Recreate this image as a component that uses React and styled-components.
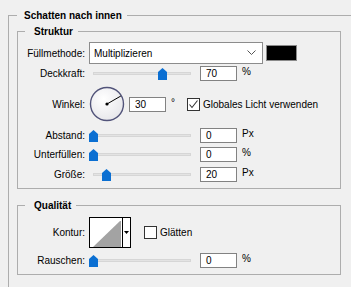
import React from 'react'
import styled, {createGlobalStyle} from "styled-components";

const GlobalStyle = createGlobalStyle`
    html, body {
        margin: 0;
        background: #f0f0f0;
        overflow: hidden;
    }
    body {
        font-family: "Liberation Sans", Arial, sans-serif;
        font-size: 10px;
        color: #000;
    }
`;

const Viewport = styled.div`
    width: 100vw;
    height: 100vh;
    overflow: hidden;
    padding-top: 8px;
    box-sizing: border-box;
`;

const Panel = styled.fieldset`
    margin: 0 -30px 0 8px;
    padding: 1px 0 0 8px;
    min-width: 0;
    height: 300px;
    border: 1px solid #adadad;
`;

const Legend = styled.legend`
    margin-left: ${p => p.$offset || 0}px;
    padding: 0 5px 0 ${p => p.$pad || 7}px;
    font-weight: bold;
    font-size: 10px;
    line-height: 15px;
`;

const Group = styled.fieldset`
    margin: ${p => p.$top || 0}px 0 0 0;
    padding: ${p => p.$padTop}px 0 ${p => p.$padBottom}px 0;
    width: 322px;
    min-width: 0;
    border: 1px solid #adadad;
`;

const Row = styled.div`
    display: flex;
    align-items: center;
    height: ${p => p.$h || 15}px;
    margin-top: ${p => p.$mt || 0}px;
`;

const Label = styled.div`
    width: 67px;
    margin-right: 4px;
    text-align: right;
    white-space: nowrap;
`;

const Select = styled.div`
    box-sizing: border-box;
    width: 174px;
    height: 22px;
    display: flex;
    align-items: center;
    justify-content: space-between;
    padding: 0 6px 0 4px;
    background: #fff;
    border: 1px solid #8c8c8c;
`;

const Swatch = styled.div`
    box-sizing: border-box;
    width: 31px;
    height: 16px;
    margin-left: 3px;
    background: #000;
    border: 1px solid #8a8a8a;
`;

const SliderBox = styled.div`
    position: relative;
    width: 108px;
    height: 15px;
    display: flex;
    align-items: center;
`;

const Track = styled.div`
    box-sizing: border-box;
    margin: 0 6px 0 4px;
    flex: 1;
    height: 3px;
    background: #e3e3e3;
    border: 1px solid #d6d6d6;
`;

const Thumb = styled.svg`
    position: absolute;
    top: 2px;
    margin-left: -4px;
`;

const Field = styled.div`
    display: flex;
    align-items: flex-start;
    margin-left: ${p => p.$ml || 3}px;
`;

const NumberBox = styled.div`
    box-sizing: border-box;
    width: 37px;
    height: 15px;
    padding-left: 5px;
    line-height: 13px;
    background: #fff;
    border: 1px solid #828282;
`;

const Unit = styled.div`
    margin-left: 5px;
    line-height: 11px;
`;

const Check = styled.div`
    box-sizing: border-box;
    width: 13px;
    height: 13px;
    margin-left: ${p => p.$ml || 0}px;
    background: #fff;
    border: 1px solid #333;
    display: flex;
    align-items: center;
    justify-content: center;
`;

const CheckText = styled.span`
    margin-left: 3px;
    white-space: nowrap;
`;

const Contour = styled.div`
    box-sizing: border-box;
    width: 42px;
    height: 31px;
    display: flex;
    border: 1px solid #000;
    background: #fff;
`;

const ContourPreview = styled.svg`
    display: block;
    border-right: 1px solid #000;
`;

const ContourArrow = styled.div`
    flex: 1;
    display: flex;
    align-items: center;
    justify-content: center;
`;

const NumberField = ({value, unit, ml}) => (
    <Field $ml={ml}>
        <NumberBox>{value}</NumberBox>
        <Unit>{unit}</Unit>
    </Field>
);

const SliderRow = ({label, value, max, unit, mt}) => (
    <Row $mt={mt}>
        <Label>{label}</Label>
        <SliderBox>
            <Track/>
            <Thumb width="9" height="12" viewBox="0 0 9 12" style={{left: 4 + (value / max) * 98}}>
                <path d="M4.5 0 L9 4 V12 H0 V4 Z" fill="#0b6fd2"/>
            </Thumb>
        </SliderBox>
        <NumberField value={value} unit={unit}/>
    </Row>
);

const Dial = ({angle}) => {
    const rad = angle * Math.PI / 180;
    return (
        <svg width="36" height="36" viewBox="0 0 36 36">
            <defs>
                <radialGradient id="dialFill" cx="0.4" cy="0.35" r="0.7">
                    <stop offset="0" stopColor="#ffffff"/>
                    <stop offset="1" stopColor="#e6e6ea"/>
                </radialGradient>
            </defs>
            <circle cx="18" cy="18" r="16.5" fill="url(#dialFill)" stroke="#52547a" strokeWidth="1.4"/>
            <line x1="18" y1="18" x2={18 + 16 * Math.cos(rad)} y2={18 - 16 * Math.sin(rad)} stroke="#000" strokeWidth="1"/>
            <circle cx="18" cy="18" r="1.6" fill="#000"/>
        </svg>
    );
};

const App = () => {
    return (
        <Viewport>
            <GlobalStyle/>
            <Panel>
                <Legend>Schatten nach innen</Legend>
                <Group $padTop={3} $padBottom={6}>
                    <Legend $offset={7} $pad={9}>Struktur</Legend>
                    <Row $h={22}>
                        <Label>Füllmethode:</Label>
                        <Select>
                            <span>Multiplizieren</span>
                            <svg width="9" height="6" viewBox="0 0 9 6">
                                <path d="M0.5 0.5 L4.5 4.5 L8.5 0.5" fill="none" stroke="#555" strokeWidth="1"/>
                            </svg>
                        </Select>
                        <Swatch/>
                    </Row>
                    <SliderRow label="Deckkraft:" value={70} max={100} unit="%" mt={2}/>
                    <Row $h={36} $mt={5}>
                        <Label>Winkel:</Label>
                        <Dial angle={30}/>
                        <NumberField value={30} unit="°" ml={4}/>
                        <Check $ml={12}>
                            <svg width="11" height="11" viewBox="0 0 11 11">
                                <path d="M1.5 5.5 L4 8.5 L9.5 1.5" fill="none" stroke="#333" strokeWidth="1.1"/>
                            </svg>
                        </Check>
                        <CheckText>Globales Licht verwenden</CheckText>
                    </Row>
                    <SliderRow label="Abstand:" value={0} max={100} unit="Px" mt={6}/>
                    <SliderRow label="Unterfüllen:" value={0} max={100} unit="%" mt={4}/>
                    <SliderRow label="Größe:" value={20} max={150} unit="Px" mt={5}/>
                </Group>
                <Group $top={9} $padTop={4} $padBottom={6}>
                    <Legend $offset={7} $pad={9}>Qualität</Legend>
                    <Row $h={31}>
                        <Label>Kontur:</Label>
                        <Contour>
                            <ContourPreview width="32" height="29" viewBox="0 0 32 29">
                                <polygon points="3,29 30,3 31,3 31,29" fill="#a3a3a3"/>
                            </ContourPreview>
                            <ContourArrow>
                                <svg width="5" height="3" viewBox="0 0 5 3">
                                    <path d="M0 0 H5 L2.5 3 Z" fill="#000"/>
                                </svg>
                            </ContourArrow>
                        </Contour>
                        <Check $ml={13}/>
                        <CheckText>Glätten</CheckText>
                    </Row>
                    <SliderRow label="Rauschen:" value={0} max={100} unit="%" mt={5}/>
                </Group>
            </Panel>
        </Viewport>
    )
}

export default App
